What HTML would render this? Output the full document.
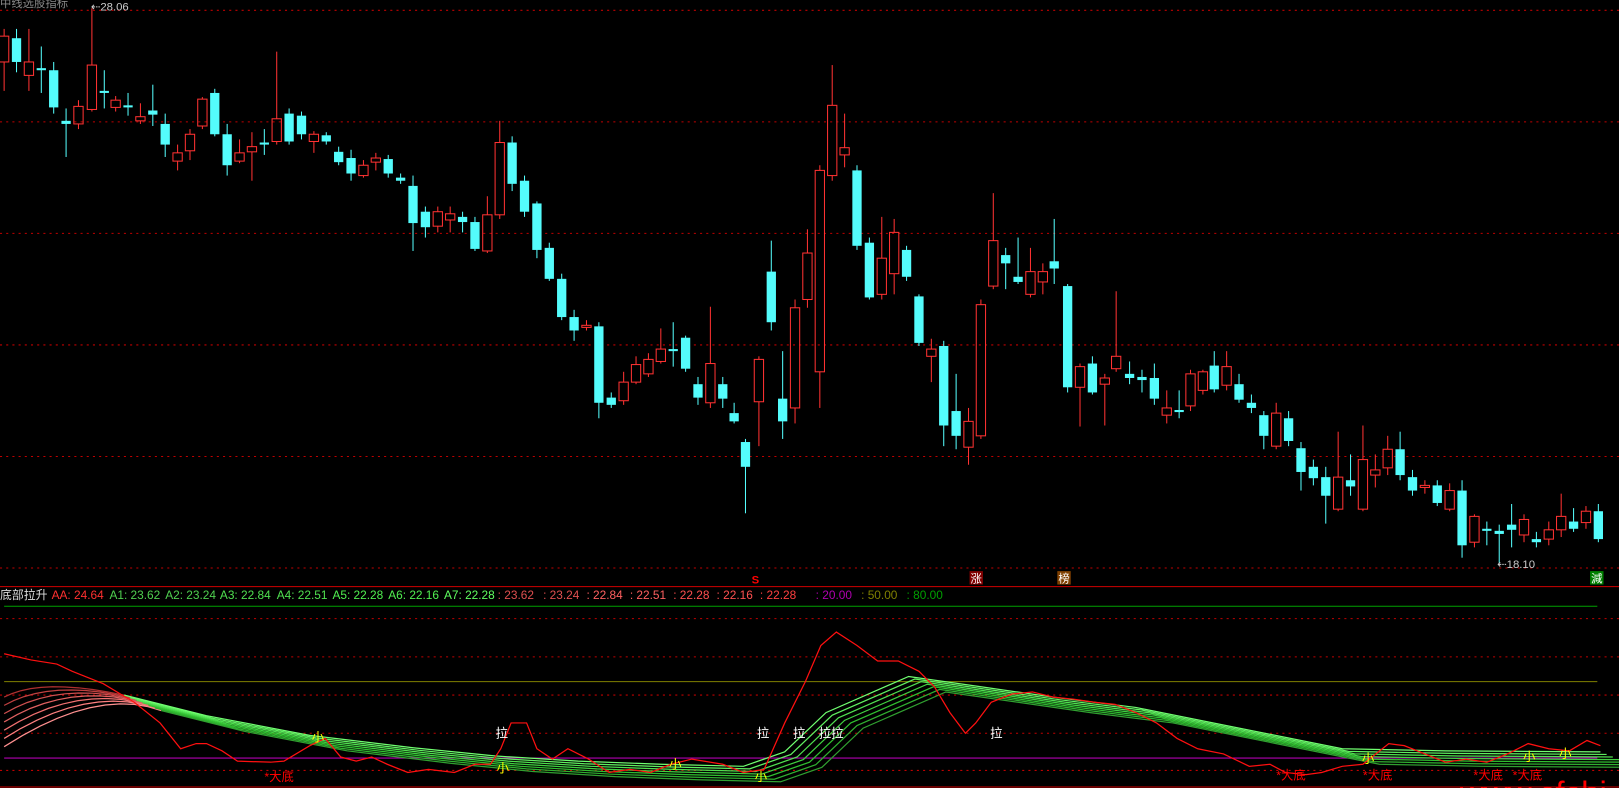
<!DOCTYPE html>
<html><head><meta charset="utf-8"><style>
html,body{margin:0;padding:0;background:#000;overflow:hidden}
svg{display:block}
text{font-family:"Liberation Sans","Noto Sans CJK SC",sans-serif}
</style></head><body>
<svg id="s" width="1619" height="788" viewBox="0 0 1568 763" preserveAspectRatio="none" xmlns="http://www.w3.org/2000/svg">
<rect width="1568" height="763" fill="#000"/>
<g stroke="#c00000" stroke-width="1" stroke-dasharray="2,4">
<line x1="0" y1="10" x2="1568" y2="10"/><line x1="0" y1="118" x2="1568" y2="118"/><line x1="0" y1="226" x2="1568" y2="226"/><line x1="0" y1="334" x2="1568" y2="334"/><line x1="0" y1="442" x2="1568" y2="442"/><line x1="0" y1="550" x2="1568" y2="550"/>
<line x1="0" y1="599" x2="1568" y2="599"/><line x1="0" y1="636" x2="1568" y2="636"/><line x1="0" y1="673" x2="1568" y2="673"/><line x1="0" y1="710" x2="1568" y2="710"/><line x1="0" y1="746" x2="1568" y2="746"/>
</g>
<line x1="0" y1="568" x2="1568" y2="568" stroke="#d00000"/>
<line x1="4" y1="587" x2="1547" y2="587" stroke="#00a000"/>
<line x1="4" y1="660" x2="1547" y2="660" stroke="#808000"/>
<line x1="4" y1="734" x2="1547" y2="734" stroke="#b000b0"/>
<line x1="0" y1="762" x2="1568" y2="762" stroke="#d00000"/>
<g id="c"></g>
<g id="l"></g>
<text x="0" y="7" fill="#888" font-size="11">中线选股指标</text>
<text x="88" y="10" fill="#ccc" font-size="11">⇠28.06</text>
<text x="1450" y="550" fill="#ccc" font-size="11">⇠18.10</text>
<text x="728" y="565" fill="#f00" font-size="11" font-weight="bold">S</text>
<rect x="939" y="553" width="13" height="13" fill="#800000"/><text x="940" y="564" fill="#fff" font-size="11">涨</text>
<rect x="1024" y="553" width="13" height="13" fill="#804000"/><text x="1025" y="564" fill="#fff" font-size="11">榜</text>
<rect x="1540" y="553" width="13" height="13" fill="#008000"/><text x="1541" y="564" fill="#fff" font-size="11">減</text>
<text y="580" font-size="11.5" xml:space="preserve"><tspan x="0" fill="#ddd">底部拉升</tspan><tspan x="50" fill="#ff3030">AA: 24.64</tspan><tspan x="106" fill="#50d050">A1: 23.62</tspan><tspan x="160" fill="#50d050">A2: 23.24</tspan><tspan x="213" fill="#50e050">A3: 22.84</tspan><tspan x="268" fill="#50e050">A4: 22.51</tspan><tspan x="322" fill="#50f050">A5: 22.28</tspan><tspan x="376" fill="#50f050">A6: 22.16</tspan><tspan x="430" fill="#60ff60">A7: 22.28</tspan><tspan x="482" fill="#e05050">: 23.62</tspan><tspan x="526" fill="#e05050">: 23.24</tspan><tspan x="568" fill="#ff6060">: 22.84</tspan><tspan x="610" fill="#ff6060">: 22.51</tspan><tspan x="652" fill="#ff5050">: 22.28</tspan><tspan x="694" fill="#ff5050">: 22.16</tspan><tspan x="736" fill="#ff4040">: 22.28</tspan><tspan x="790" fill="#b000b0">: 20.00</tspan><tspan x="834" fill="#808000">: 50.00</tspan><tspan x="878" fill="#00a000">: 80.00</tspan></text>
<g font-size="12">
<text x="480" y="714" fill="#fff">拉</text><text x="733" y="714" fill="#fff">拉</text><text x="768" y="714" fill="#fff">拉</text><text x="793" y="714" fill="#fff">拉拉</text><text x="959" y="714" fill="#fff">拉</text>
<text x="302" y="718" fill="#ff0">小</text><text x="481" y="748" fill="#ff0">小</text><text x="648" y="744" fill="#ff0">小</text><text x="731" y="756" fill="#ff0">小</text><text x="1319" y="739" fill="#ff0">小</text><text x="1475" y="737" fill="#ff0">小</text><text x="1510" y="734" fill="#ff0">小</text>
<text x="256" y="756" fill="#f00">*大底</text><text x="1236" y="755" fill="#f00">*大底</text><text x="1320" y="755" fill="#f00">*大底</text><text x="1427" y="755" fill="#f00">*大底</text><text x="1465" y="755" fill="#f00">*大底</text>
</g>
<text x="1414" y="779" fill="#f00" font-size="32">www.cfchi.com</text>
</svg>
<script>
var D=[[4,'r',35,60,28,88],[16,'c',37,60,28,70],[28,'r',60,73,28,88],[40,'c',66,68,45,90],[52,'c',68,104,60,110],[64,'c',117,120,105,152],[76,'r',103,120,97,125],[89,'r',63,106,8,108],[101,'c',88,90,68,105],[112,'r',97,104,93,108],[124,'c',102,104,90,112],[136,'r',113,117,100,120],[148,'c',107,111,82,122],[160,'c',120,140,110,152],[172,'r',148,156,140,165],[184,'r',130,146,125,155],[196,'r',96,122,94,125],[208,'c',90,130,86,132],[220,'c',130,160,120,170],[232,'r',148,156,135,158],[244,'r',142,147,128,175],[256,'c',138,140,125,150],[268,'r',115,137,50,140],[280,'c',110,137,105,140],[292,'c',112,130,108,135],[304,'r',130,137,127,148],[316,'c',131,137,128,140],[328,'c',147,157,142,160],[340,'c',153,168,145,175],[352,'r',160,170,155,172],[364,'r',153,157,148,165],[376,'c',154,168,150,172],[388,'c',172,175,168,178],[400,'c',180,216,170,243],[412,'c',205,220,200,230],[424,'r',205,219,200,225],[436,'r',207,213,200,225],[448,'c',210,215,205,225],[460,'c',215,241,210,243],[472,'r',208,243,190,245],[484,'r',138,208,117,212],[496,'c',138,178,132,185],[508,'c',175,205,170,210],[520,'c',197,242,195,250],[532,'c',240,270,235,272],[544,'c',270,307,265,310],[556,'c',307,320,300,330],[568,'r',315,317,310,320],[580,'c',316,390,312,405],[592,'c',385,392,380,395],[604,'r',370,388,360,392],[616,'r',353,370,345,372],[628,'r',348,362,342,365],[640,'r',338,350,318,352],[652,'c',338,340,312,355],[664,'c',327,357,325,360],[676,'c',372,385,365,392],[688,'r',352,390,297,395],[700,'c',372,386,365,395],[711,'c',400,408,390,410],[722,'c',428,452,425,497],[735,'r',348,389,345,432],[747,'c',263,312,233,320],[758,'c',386,408,340,425],[770,'r',298,395,290,410],[782,'r',245,290,222,298],[794,'r',165,360,160,395],[806,'r',102,170,63,175],[818,'r',143,150,110,162],[830,'c',165,238,160,242],[842,'c',235,288,230,290],[854,'r',250,285,210,290],[866,'r',225,265,212,285],[878,'c',242,268,238,272],[890,'c',287,332,285,335],[902,'r',338,345,328,370],[914,'c',335,412,330,432],[926,'c',398,422,362,435],[938,'r',408,433,395,450],[950,'r',295,422,290,425],[962,'r',233,277,187,280],[974,'c',247,255,240,280],[986,'c',268,273,230,275],[998,'r',263,285,240,288],[1010,'r',263,273,255,285],[1021,'c',253,260,212,275],[1034,'c',277,375,275,380],[1046,'r',355,375,352,413],[1058,'c',352,380,345,382],[1070,'r',366,372,362,412],[1081,'r',345,357,282,360],[1094,'c',362,366,350,372],[1106,'c',365,368,358,380],[1118,'c',366,386,352,392],[1130,'r',395,402,378,410],[1142,'c',397,399,378,405],[1153,'r',362,393,358,398],[1165,'r',360,378,358,382],[1176,'c',354,377,340,380],[1188,'r',355,373,340,378],[1200,'c',372,387,362,390],[1212,'c',390,395,382,400],[1224,'c',402,422,398,435],[1236,'r',400,432,390,435],[1248,'c',405,427,398,432],[1260,'c',434,457,428,475],[1272,'c',452,463,445,470],[1284,'c',462,480,452,507],[1296,'r',462,493,418,495],[1308,'c',465,471,440,480],[1320,'r',445,493,412,495],[1332,'r',455,460,440,472],[1344,'r',435,453,422,460],[1356,'c',435,460,418,465],[1368,'c',462,475,455,480],[1380,'r',470,472,465,478],[1392,'c',470,487,465,490],[1404,'r',475,493,468,495],[1416,'c',475,528,465,540],[1428,'r',500,525,498,530],[1440,'c',512,514,505,528],[1452,'c',514,517,508,545],[1464,'c',508,513,488,530],[1476,'r',503,518,498,525],[1488,'c',522,525,515,530],[1500,'r',513,522,505,528],[1512,'r',500,513,478,520],[1524,'c',505,512,492,515],[1536,'r',495,506,490,512],[1548,'c',495,522,488,525]];
var h='';
D.forEach(function(d){var x=d[0],t=d[2],b=d[3];if(b-t<2)b=t+2;
if(d[1]=='r'){h+='<line x1="'+x+'" y1="'+d[4]+'" x2="'+x+'" y2="'+t+'" stroke="#ff3232"/><line x1="'+x+'" y1="'+b+'" x2="'+x+'" y2="'+d[5]+'" stroke="#ff3232"/><rect x="'+(x-4.5)+'" y="'+t+'" width="9" height="'+(b-t)+'" fill="none" stroke="#ff3232"/>';}
else{h+='<line x1="'+x+'" y1="'+d[4]+'" x2="'+x+'" y2="'+d[5]+'" stroke="#54fcfc"/><rect x="'+(x-4.5)+'" y="'+t+'" width="9" height="'+(b-t)+'" fill="#54fcfc"/>';}});
document.getElementById('c').innerHTML=h;
var base=[[120,673],[200,693],[300,712],[400,724],[480,732],[560,737],[640,740],[720,742],[760,728],[800,690],[880,655],[950,665],[1020,675],[1100,685],[1200,705],[1300,725],[1400,727],[1550,728]];
var g='';
function ps(a){return a.map(function(p){return p[0].toFixed(1)+','+p[1].toFixed(1)}).join(' ');}
for(var i=6;i>=0;i--){
var col=['#70ff70','#60f060','#50e050','#40d040','#30c030','#30b030','#30a030'][i];
var rc=['#ff9090','#ff8080','#f07070','#e06060','#d05050','#c04040','#b03030'][6-i];
// left curved fan
var y0=675+i*8, px=50+i*9, py=662+i*1.5, jx=120+i*6, jy=673+i*2.5;
var left=[];
for(var t=0;t<=1.0001;t+=0.1){var x=(1-t)*(1-t)*4+2*t*(1-t)*(px-10)+t*t*jx;var y=(1-t)*(1-t)*y0+2*t*(1-t)*(py-6)+t*t*jy;left.push([x,y]);}
g+='<polyline points="'+ps(left)+'" fill="none" stroke="'+rc+'" stroke-width="1.2"/>';
var pts=[[jx,jy]];base.slice(1).forEach(function(p){pts.push([p[0]+i*6,p[1]+i*2.5]);});
g+='<polyline points="'+ps(pts)+'" fill="none" stroke="'+col+'" stroke-width="1.2"/>';}
var aa='4,633 30,639 55,643 70,650 100,662 130,680 155,700 175,725 190,720 200,720 215,727 230,737 262,738 275,737 300,722 315,715 330,733 345,737 360,733 375,740 395,748 415,745 440,748 460,740 475,740 485,725 495,700 510,700 520,725 535,735 550,725 570,735 590,748 610,745 630,748 650,740 670,735 700,740 720,748 740,745 760,700 780,660 795,625 810,612 830,625 850,640 870,640 890,650 905,665 920,690 935,710 945,700 960,680 980,672 1000,670 1020,675 1040,677 1060,680 1080,682 1100,690 1120,700 1140,715 1160,725 1185,730 1210,742 1230,740 1245,748 1265,750 1280,748 1300,742 1320,740 1345,720 1360,722 1380,730 1400,738 1420,735 1440,738 1460,730 1480,720 1500,725 1520,727 1537,717 1550,722';
g+='<polyline points="'+aa+'" fill="none" stroke="#ff1010" stroke-width="1.2"/>';
document.getElementById('l').innerHTML=g;
</script>
</body></html>
